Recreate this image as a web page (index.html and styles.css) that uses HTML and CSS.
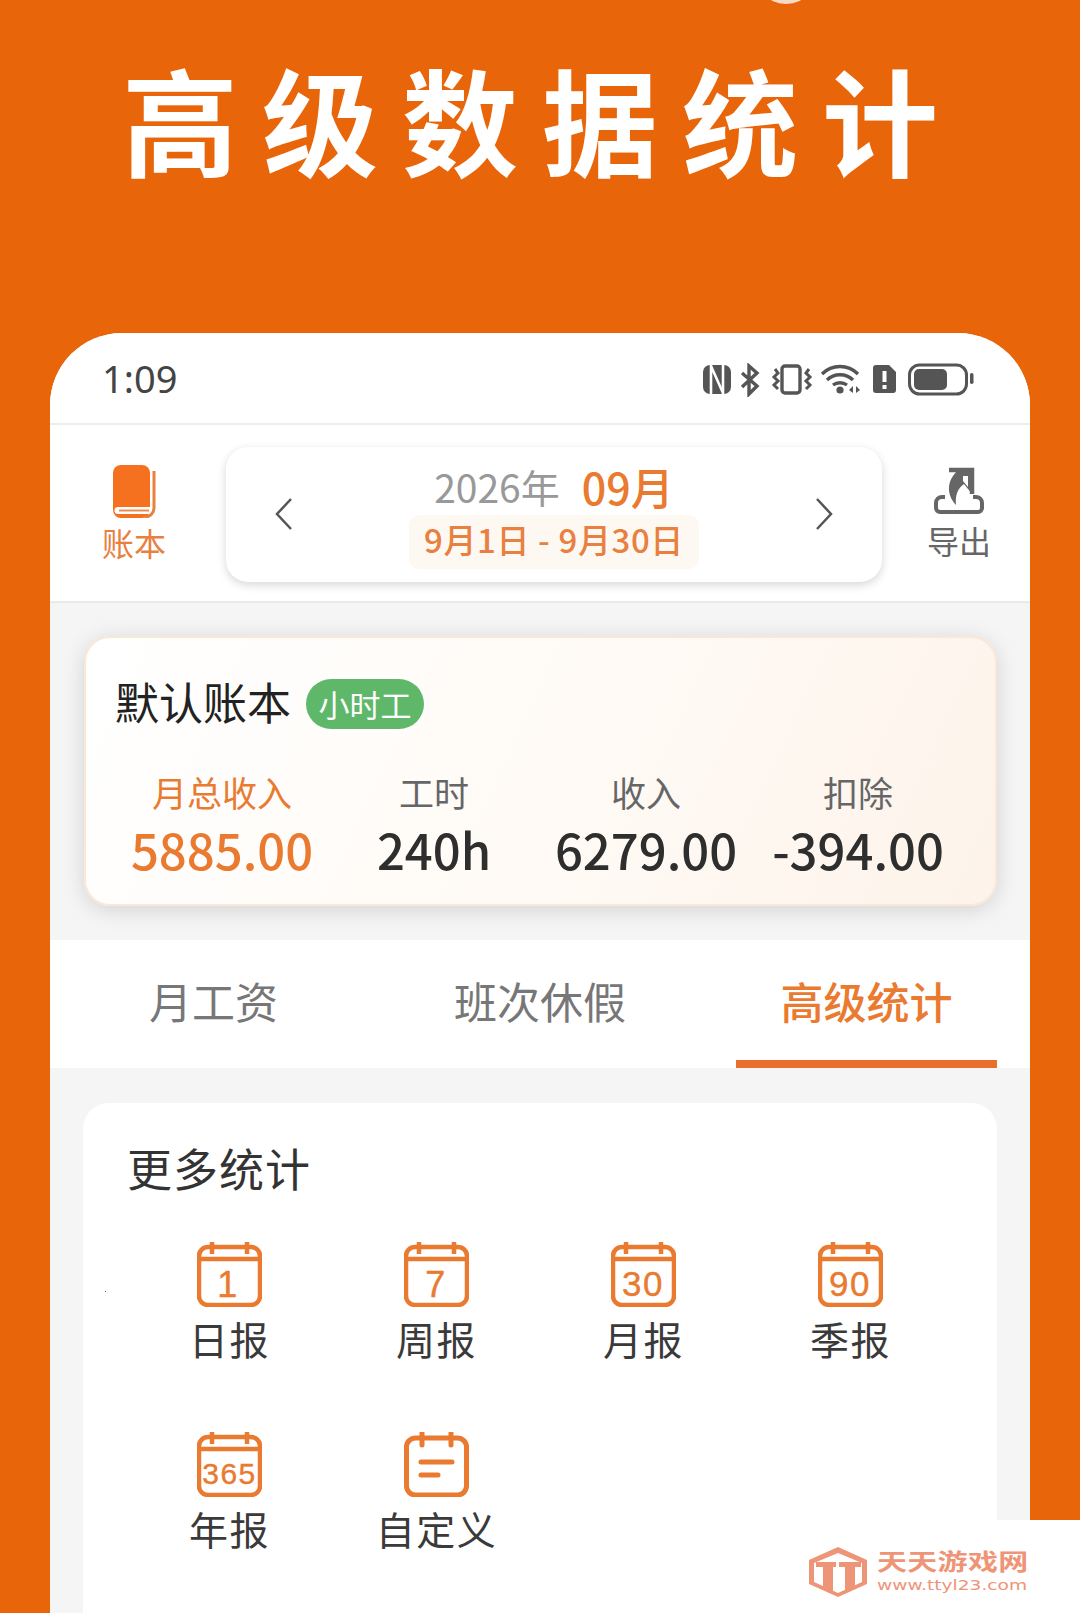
FILE: index.html
```html
<!DOCTYPE html>
<html lang="zh-CN">
<head>
    <meta charset="UTF-8">
    <meta name="viewport" content="width=device-width, initial-scale=1.0">
    <title>高级数据统计</title>
    <link rel="stylesheet" href="styles.css">
</head>
<body>
<svg class="defs" width="0" height="0">
    <symbol id="cal-frame" viewBox="0 0 65 65">
        <rect x="2" y="5" width="61" height="58" rx="9" fill="none" stroke="#e97a30" stroke-width="4.500"/>
        <path d="M2 17H63M15 0V12M50 0V12" fill="none" stroke="#e97a30" stroke-width="4.500"/>
    </symbol>
</svg>

<div class="top-dot"></div>
<div class="speck"></div>
<h1 class="headline">高级数据统计</h1>

<div class="phone">
    <!-- status bar -->
    <div class="status">
        <span class="clock">1:09</span>
        <svg class="status-icons" width="272" height="34" viewBox="0 0 272 34">
            <rect x="0" y="2" width="28" height="29" rx="7" fill="#555"/>
            <path d="M8 2V31M20 2V31M8 3L20 30" fill="none" stroke="#fff" stroke-width="2.600"/>
            <path d="M39 10L54 23L46 31V3L54 10L39 24" fill="none" stroke="#555" stroke-width="3.400"/>
            <rect x="79" y="3" width="18" height="27" rx="3" fill="none" stroke="#555" stroke-width="3.400"/>
            <path d="M72 6L75 10L71 14L75 18L71 22L75 26M106 6L103 10L107 14L103 18L107 22L103 26" fill="none" stroke="#555" stroke-width="3"/>
            <path d="M119 11C129 1 145 1 155 11M124 17C131 10 143 10 150 17M130 22C134 19 140 19 144 22" fill="none" stroke="#555" stroke-width="3.400"/>
            <circle cx="137" cy="27" r="3.600" fill="#555"/>
            <path d="M146 27L150 23V30ZM157 27L153 23V30Z" fill="#555"/>
            <path d="M173 2H186L193 9V27A3 3 0 0 1 190 30H173A3 3 0 0 1 170 27V5A3 3 0 0 1 173 2Z" fill="#555"/>
            <path d="M181.500 8V19M181.500 22V26" fill="none" stroke="#fff" stroke-width="4"/>
            <rect x="206.500" y="2" width="57" height="29" rx="10" fill="none" stroke="#555" stroke-width="3"/>
            <rect x="211" y="6" width="33" height="21" rx="5" fill="#555"/>
            <rect x="267" y="10" width="3.500" height="11" rx="1.700" fill="#555"/>
        </svg>
    </div>

    <!-- month picker -->
    <div class="header">
        <div class="side-btn side-btn-active">
            <svg class="book" width="44" height="53" viewBox="0 0 44 53">
                <rect x="0" y="0" width="37" height="53" rx="8" fill="#f5711f"/>
                <path d="M5 45.500H38" stroke="#fff" stroke-width="7" stroke-linecap="round"/>
                <path d="M6 45.500H36" stroke="#f08a4a" stroke-width="2"/>
                <path d="M41 6V43A9 9 0 0 1 32 52" fill="none" stroke="#e8803f" stroke-width="3"/>
            </svg>
            <span>账本</span>
        </div>
        <div class="picker">
            <svg class="chevron" width="20" height="34" viewBox="0 0 20 34"><path d="M17 2L3 17L17 32" fill="none" stroke="#555" stroke-width="2.500"/></svg>
            <div class="picker-mid">
                <div class="picker-month"><span class="year">2026年</span><span class="month">09月</span></div>
                <div class="range">9月1日 - 9月30日</div>
            </div>
            <svg class="chevron" width="20" height="34" viewBox="0 0 20 34"><path d="M3 2L17 17L3 32" fill="none" stroke="#555" stroke-width="2.500"/></svg>
        </div>
        <div class="side-btn">
            <svg class="export" width="50" height="48" viewBox="0 0 50 48">
                <path d="M11 30H8A6 6 0 0 0 2 36V41A4 4 0 0 0 6 45H44A4 4 0 0 0 48 41V36A6 6 0 0 0 42 30H39" fill="none" stroke="#666" stroke-width="4"/>
                <path d="M15 3H38V27" fill="none" stroke="#666" stroke-width="4.500"/>
                <path d="M23 4C13 14 12 27 22 38C21 28 24 21 30 17L38 27V3Z" fill="#666"/>
                <path d="M29 9L34 9V20L29 14Z" fill="#fff"/>
            </svg>
            <span>导出</span>
        </div>
    </div>

    <div class="summary-wrap">
        <div class="summary">
            <div class="summary-top">
                <span class="book-name">默认账本</span>
                <span class="badge">小时工</span>
            </div>
            <div class="figures">
                <div class="figure figure-main"><div class="fig-label">月总收入</div><div class="fig-value">5885.00</div></div>
                <div class="figure"><div class="fig-label">工时</div><div class="fig-value">240h</div></div>
                <div class="figure"><div class="fig-label">收入</div><div class="fig-value">6279.00</div></div>
                <div class="figure"><div class="fig-label">扣除</div><div class="fig-value">-394.00</div></div>
            </div>
        </div>
    </div>

    <div class="tabs">
        <div class="tab">月工资</div>
        <div class="tab">班次休假</div>
        <div class="tab tab-active">高级统计</div>
    </div>

    <div class="content">
        <div class="more">
            <div class="more-title">更多统计</div>
            <div class="report-grid">
                <div class="report">
                    <svg class="cal" width="65" height="65" viewBox="0 0 65 65"><use href="#cal-frame"/><text x="31" y="55" font-size="36">1</text></svg>
                    <span>日报</span>
                </div>
                <div class="report">
                    <svg class="cal" width="65" height="65" viewBox="0 0 65 65"><use href="#cal-frame"/><text x="32" y="55" font-size="36">7</text></svg>
                    <span>周报</span>
                </div>
                <div class="report">
                    <svg class="cal" width="65" height="65" viewBox="0 0 65 65"><use href="#cal-frame"/><text x="32" y="54" font-size="35">30</text></svg>
                    <span>月报</span>
                </div>
                <div class="report">
                    <svg class="cal" width="65" height="65" viewBox="0 0 65 65"><use href="#cal-frame"/><text x="32" y="54" font-size="35">90</text></svg>
                    <span>季报</span>
                </div>
                <div class="report">
                    <svg class="cal" width="65" height="65" viewBox="0 0 65 65"><use href="#cal-frame"/><text x="32.500" y="52" font-size="30">365</text></svg>
                    <span>年报</span>
                </div>
                <div class="report">
                    <svg class="cal" width="65" height="65" viewBox="0 0 65 65">
                        <rect x="2.500" y="6" width="60" height="57" rx="9" fill="none" stroke="#e97a30" stroke-width="5"/>
                        <path d="M18 1V13M47 1V13" stroke="#e97a30" stroke-width="5" stroke-linecap="round"/>
                        <path d="M17 30H48M17 43H34" stroke="#e97a30" stroke-width="5" stroke-linecap="round"/>
                    </svg>
                    <span>自定义</span>
                </div>
            </div>
        </div>
    </div>
</div>

<!-- site watermark, sits over the corner -->
<div class="watermark">
    <svg width="58" height="50" viewBox="0 0 58 50">
        <path d="M29 0L58 13V37L29 50L0 37V13Z" fill="#ee9477"/>
        <path d="M29 6L53 16V35L29 46L5 35V16Z" fill="#fff"/>
        <path d="M7 15H27V20H24V46L14 41V20H7ZM30 15H52V20H46V39L36 44V20H30Z" fill="#ee9477"/>
    </svg>
    <div class="wm-text">
        <div class="wm-name">天天游戏网</div>
        <div class="wm-url">www.ttyl23.com</div>
    </div>
</div>
</body>
</html>
```

FILE: styles.css
```css
html {
  margin: 0px;
}
body {
  margin: 0;
  width: 1080px;
  height: 1613px;
  overflow: hidden;
  position: relative;
  background-color: #e8650a;
  font-family: "Noto Sans CJK SC", "Noto Sans", sans-serif;
  color: #333333;
}
.defs {
  display: block;
  height: 0;
}
.top-dot {
  position: absolute;
  left: 768px;
  top: -14px;
  width: 36px;
  height: 18px;
  border-radius: 50%;
  background-color: #f8d9c8;
}
.speck {
  position: absolute;
  left: 105px;
  top: 1291px;
  width: 1px;
  height: 1px;
  background-color: #666666;
}
.headline {
  margin: 0;
  height: 333px;
  box-sizing: border-box;
  padding: 47px 0 0 122px;
  font-size: 116px;
  line-height: 140px;
  font-weight: 700;
  letter-spacing: 24px;
  color: #ffffff;
  white-space: nowrap;
}

.phone {
  margin: 0 50px;
  height: 1280px;
  background-color: #f5f5f5;
  border-radius: 72px 72px 0 0;
  overflow: hidden;
}
.status {
  height: 92px;
  box-sizing: border-box;
  padding: 0 55px 0 52px;
  background-color: #ffffff;
  border-bottom: 2px solid #eeeeee;
  display: flex;
  align-items: center;
  justify-content: space-between;
}
.clock {
  font-family: "Noto Sans", sans-serif;
  font-size: 38px;
  color: #444444;
}
.status-icons {
  margin-top: 3px;
}

/* month picker row */
.header {
  height: 178px;
  box-sizing: border-box;
  padding: 0 38px 0 50px;
  background-color: #ffffff;
  border-bottom: 2px solid #e9e9e9;
  display: flex;
  align-items: center;
}
.side-btn {
  width: 66px;
  display: flex;
  flex-direction: column;
  align-items: center;
  font-size: 32px;
  line-height: 40px;
  color: #666666;
  flex-shrink: 0;
}
.side-btn-active {
  color: #e8803f;
  position: relative;
  left: 1px;
}
.book {
  margin-left: 2px;
  margin-bottom: 4px;
}
.export {
  margin-bottom: 5px;
}
.picker {
  width: 656px;
  height: 135px;
  margin: 2px 44px 0 60px;
  box-sizing: border-box;
  padding: 0 48px 0 48px;
  background-color: #ffffff;
  border-radius: 22px;
  box-shadow: 0 3px 10px rgba(0, 0, 0, 0.16);
  display: flex;
  align-items: center;
  justify-content: space-between;
  flex-shrink: 0;
}
.picker-mid {
  display: flex;
  flex-direction: column;
  align-items: center;
}
.picker-month {
  height: 54px;
  display: flex;
  align-items: center;
}
.year {
  font-size: 39px;
  color: #999999;
}
.month {
  margin-left: 22px;
  font-size: 43px;
  font-weight: 500;
  color: #e97a30;
}
.range {
  height: 54px;
  line-height: 48px;
  margin-top: 2px;
  box-sizing: border-box;
  padding: 0 15px;
  font-size: 33px;
  font-weight: 500;
  letter-spacing: 0.6px;
  color: #e8803f;
  background-color: #fef8f3;
  border-radius: 10px;
  white-space: nowrap;
}

/* summary card */
.summary-wrap {
  height: 337px;
  box-sizing: border-box;
  padding: 33px 33px 0 34px;
}
.summary {
  height: 270px;
  box-sizing: border-box;
  padding: 38px 0 0 0;
  background: linear-gradient(115deg, #ffffff 0%, #fffaf5 55%, #fdf3ea 100%);
  border: 2px solid #f9e7d8;
  border-radius: 26px;
  box-shadow: 0 4px 22px rgba(0, 0, 0, 0.14);
}
.summary-top {
  display: flex;
  align-items: center;
  padding-left: 29px;
}
.book-name {
  font-size: 44px;
  line-height: 50px;
  color: #222222;
}
.badge {
  margin-left: 15px;
  width: 118px;
  height: 50px;
  line-height: 50px;
  text-align: center;
  font-size: 31px;
  color: #ffffff;
  background-color: #5fb86a;
  border-radius: 25px;
  position: relative;
  top: 3px;
}
.figures {
  display: grid;
  grid-template-columns: repeat(4, 212px);
  padding-left: 30px;
  margin-top: 44px;
}
.figure {
  text-align: center;
  color: #2e2e2e;
}
.fig-label {
  font-size: 35px;
  line-height: 44px;
  color: #666666;
}
.fig-value {
  font-size: 49px;
  line-height: 70px;
  font-weight: 500;
  white-space: nowrap;
}
.figure-main .fig-label,
.figure-main .fig-value {
  color: #e97a30;
}

/* tabs */
.tabs {
  height: 128px;
  box-sizing: border-box;
  padding: 0 33px;
  background-color: #ffffff;
  display: flex;
  justify-content: space-between;
}
.tab {
  width: 261px;
  line-height: 120px;
  text-align: center;
  font-size: 43px;
  color: #777777;
  box-sizing: border-box;
}
.tab-active {
  color: #e97a30;
  font-weight: 500;
  border-bottom: 8px solid #e9702a;
}

.content {
  padding: 35px 33px 0 33px;
}
.more {
  height: 600px;
  box-sizing: border-box;
  padding: 34px 0 0 43px;
  background-color: #ffffff;
  border-radius: 26px;
}
.more-title {
  font-size: 45px;
  line-height: 62px;
  letter-spacing: 1px;
  padding-left: 1px;
  color: #333333;
}
.report-grid {
  display: grid;
  grid-template-columns: repeat(4, 207px);
  grid-auto-rows: 190px;
  margin-top: 43px;
}
.report {
  display: flex;
  flex-direction: column;
  align-items: center;
  font-size: 39px;
  line-height: 50px;
  letter-spacing: 1.5px;
  color: #3a3a3a;
}
.report svg {
  margin-bottom: 6px;
}
.cal text {
  font-family: "Liberation Sans", sans-serif;
  fill: #e97a30;
  stroke: #e97a30;
  stroke-width: 0.4px;
  text-anchor: middle;
}

/* watermark */
.watermark {
  position: absolute;
  left: 800px;
  top: 1520px;
  width: 280px;
  height: 93px;
  box-sizing: border-box;
  padding: 27px 0 0 9px;
  background-color: #ffffff;
  display: flex;
  align-items: flex-start;
}
.wm-text {
  margin: 2px 0 0 10px;
}
.wm-name {
  height: 30px;
  font-size: 30px;
  line-height: 30px;
  font-weight: 700;
  letter-spacing: 0.3px;
  color: #ee9477;
  white-space: nowrap;
  transform: scaleY(0.75);
  transform-origin: left top;
}
.wm-url {
  margin-top: -1px;
  font-family: "DejaVu Sans", sans-serif;
  font-size: 14px;
  line-height: 14px;
  color: #ee9477;
  white-space: nowrap;
  transform: scaleX(1.33);
  transform-origin: left top;
}
```
